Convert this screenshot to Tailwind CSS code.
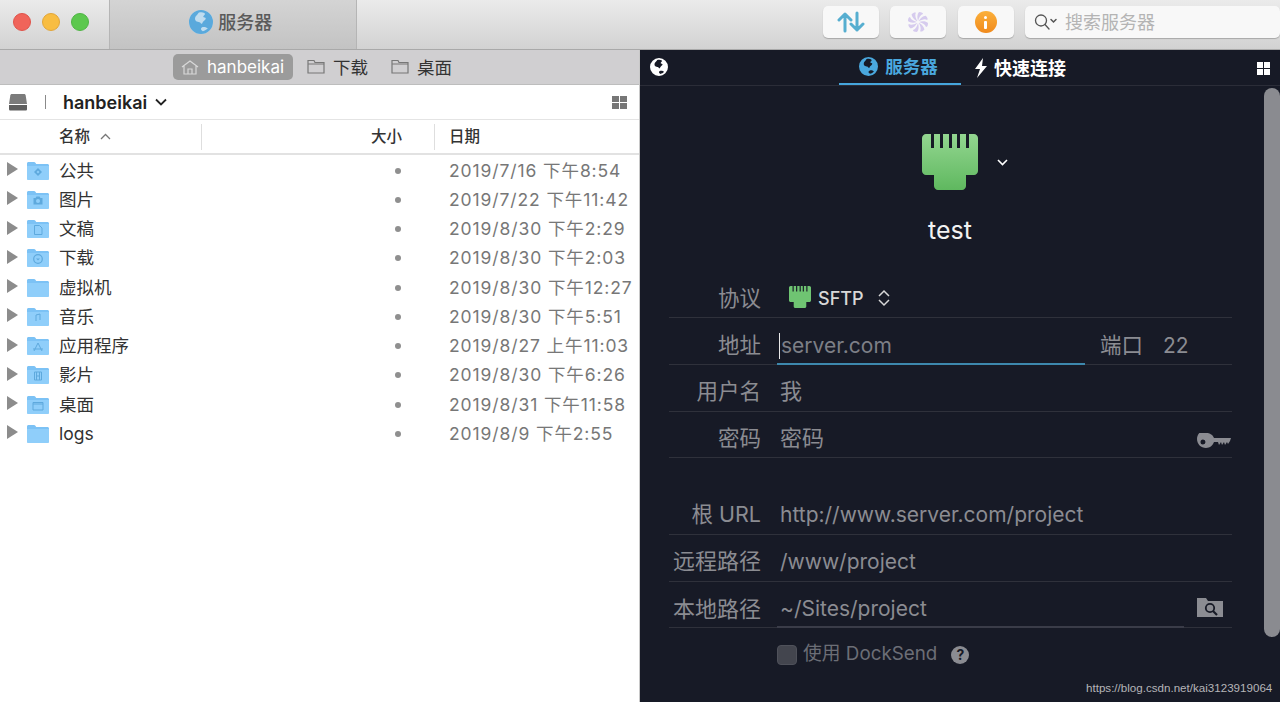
<!DOCTYPE html>
<html lang="en">
<head>
  <meta charset="UTF-8">
  <title>Transmit</title>
  <script src="https://cdn.jsdelivr.net/npm/@tailwindcss/browser@4"></script>
</head>
<body class="w-[1280px] h-[702px] overflow-hidden bg-white font-['Inter','Noto_Sans_CJK_SC',sans-serif]">
  <svg class="hidden">
    <symbol id="globe" viewBox="0 0 20 20">
      <path fill="currentColor" fill-rule="evenodd" d="M10 0a10 10 0 1 0 0 20a10 10 0 0 0 0-20zM8 2.200c1.600-.5 3.600-.5 4.800.4c1 .8.300 1.600-.5 2.200c-.8.600-.3 1.500.700 1.500c1.100 0 1.200 1 .5 1.800c-.9 1-2 1.500-2.300 2.800c-.2.800-1 .8-1.400.1c-.5-.9-1.600-1-2.500-1.200c-1.300-.3-2.400-1.400-2.300-2.800c.1-1.300.8-2.100 1.500-2.700c.6-.6 1-1.300 1.500-2.100zM11.500 14.200c1.400-.4 3.200.2 4.200 1.100c-1.100 1.200-2.500 2.100-4.200 2.400c-.7-.5-1.500-.9-1.500-1.800c0-.8.700-1.400 1.500-1.700z"/>
    </symbol>
    <symbol id="folder" viewBox="0 0 24 20">
      <path fill="#7cc2f5" d="M1 2.500c0-.8.600-1.500 1.500-1.500h5.500c.7 0 1 .3 1.400.8l.8 1.200h11.300c.8 0 1.500.7 1.500 1.500v13c0 .8-.7 1.500-1.500 1.500h-19c-.8 0-1.500-.7-1.500-1.500z"/>
      <path fill="#8fcefa" d="M1 5h22v12.500c0 .8-.7 1.500-1.500 1.500h-19c-.8 0-1.500-.7-1.500-1.500z"/>
    </symbol>
    <symbol id="jack" viewBox="0 0 56 56">
      <path fill="currentColor" d="M4 0h5v14h3V0h6v14h3V0h6v14h3V0h5v14h3V0h6v14h3V0h5c2 0 4 2 4 4v33c0 2-2 4-4 4H44v11c0 2-2 4-4 4H16c-2 0-4-2-4-4V41H4c-2 0-4-2-4-4V4c0-2 2-4 4-4z"/>
    </symbol>
  </svg>

  <!-- toolbar -->
  <header class="h-[50px] flex items-start bg-gradient-to-b from-[#ebebeb] to-[#d2d2d2] border-b border-[#a9a9a9]">
    <div class="w-[109px] h-[44px] flex items-center gap-[11px] pl-[13px]">
      <span class="w-[18px] h-[18px] rounded-full bg-[#f0645a] border border-[#e0534a]"></span>
      <span class="w-[18px] h-[18px] rounded-full bg-[#f8bd42] border border-[#e2a63a]"></span>
      <span class="w-[18px] h-[18px] rounded-full bg-[#5cc84e] border border-[#4fb544]"></span>
    </div>
    <div class="w-[248px] h-[49px] flex items-center justify-center gap-[5px] pr-[4px] pb-[5px] bg-gradient-to-b from-[#d4d4d4] to-[#c3c3c3] border-x border-[#b5b5b5]">
      <span class="w-[24px] h-[24px] rounded-full bg-[#bfdcef]">
        <svg class="w-[24px] h-[24px] text-[#5aa9dc]"><use href="#globe"/></svg>
      </span>
      <span class="text-[18px] font-medium text-[#5a5a5a]">服务器</span>
    </div>
    <div class="flex-1 h-[44px] flex items-center pl-[466px] gap-[11.500px]">
      <button class="w-[56px] h-[32px] flex items-center justify-center bg-[#f8f8f8] rounded-[5px] shadow-[0_1px_1px_#a8a8a8]">
        <svg class="w-[28px] h-[22px]" viewBox="0 0 28 22" fill="none" stroke="#56aed0" stroke-width="3" stroke-linecap="round" stroke-linejoin="round"><path d="M8 20V3M2 9l6-6l6 6M20 2v17M14 13l6 6l6-6"/></svg>
      </button>
      <button class="w-[56px] h-[32px] flex items-center justify-center bg-[#f8f8f8] rounded-[5px] shadow-[0_1px_1px_#a8a8a8]">
        <svg class="w-[22px] h-[22px]" viewBox="0 0 22 22" fill="#d6cbee"><path d="M11 10c-1-3-1-7 1-9c3 0 4 1 4 2c-3 1-4 4-5 7z"/><path transform="rotate(45 11 11)" d="M11 10c-1-3-1-7 1-9c3 0 4 1 4 2c-3 1-4 4-5 7z"/><path transform="rotate(90 11 11)" d="M11 10c-1-3-1-7 1-9c3 0 4 1 4 2c-3 1-4 4-5 7z"/><path transform="rotate(135 11 11)" d="M11 10c-1-3-1-7 1-9c3 0 4 1 4 2c-3 1-4 4-5 7z"/><path transform="rotate(180 11 11)" d="M11 10c-1-3-1-7 1-9c3 0 4 1 4 2c-3 1-4 4-5 7z"/><path transform="rotate(225 11 11)" d="M11 10c-1-3-1-7 1-9c3 0 4 1 4 2c-3 1-4 4-5 7z"/><path transform="rotate(270 11 11)" d="M11 10c-1-3-1-7 1-9c3 0 4 1 4 2c-3 1-4 4-5 7z"/><path transform="rotate(315 11 11)" d="M11 10c-1-3-1-7 1-9c3 0 4 1 4 2c-3 1-4 4-5 7z"/></svg>
      </button>
      <button class="w-[56px] h-[32px] flex items-center justify-center bg-[#f8f8f8] rounded-[5px] shadow-[0_1px_1px_#a8a8a8]">
        <span class="w-[22px] h-[22px] rounded-full bg-gradient-to-b from-[#fbb03a] to-[#f08a1c] flex flex-col items-center justify-center gap-[2px]">
          <span class="w-[3px] h-[3px] bg-white rounded-full"></span>
          <span class="w-[3px] h-[8px] bg-white rounded-[1px]"></span>
        </span>
      </button>
      <div class="w-[255px] h-[32px] flex items-center bg-[#f8f8f8] rounded-[5px] shadow-[0_1px_1px_#a8a8a8] pl-[9px]">
        <svg class="w-[24px] h-[18px]" viewBox="0 0 24 18" fill="none" stroke="#555" stroke-width="1.300" stroke-linecap="round"><circle cx="7" cy="7.500" r="5.500"/><path d="M11 11.500l4 4.500"/><path stroke-width="1.500" d="M17 6.500l2.500 2.500l2.500-2.500"/></svg>
        <span class="ml-[7px] text-[18px] text-[#b4b4b4]">搜索服务器</span>
      </div>
    </div>
  </header>

  <main class="flex h-[652px]">
    <!-- local pane -->
    <section class="w-[640px] flex flex-col border-r border-[#c8c8c8] bg-white">
      <nav class="h-[35px] flex items-center pl-[173px] pb-[1px] bg-[#d0cfd1] border-b border-[#bdbdbd]">
        <div class="w-[120px] h-[26px] flex items-center gap-[8px] pl-[8px] rounded-[5px] bg-[#9b9b9b] text-white text-[17px]">
          <svg class="w-[18px] h-[16px]" viewBox="0 0 18 16" fill="none" stroke="#d8d8d8" stroke-width="1.200"><path d="M1 8l8-6l8 6M3 7v8h12V7M7 15v-5h4v5"/></svg>
          <span class="pt-[2px]">hanbeikai</span>
        </div>
        <div class="ml-[14px] flex items-center gap-[8px] text-[17.500px] text-[#333]">
          <svg class="w-[18px] h-[15px]" viewBox="0 0 18 15" fill="none" stroke="#777" stroke-width="1.200"><path d="M1 4V1.500h6L8 3.500h9V14H1zM1 5h16"/></svg>
          <span class="pt-[4px]">下载</span>
        </div>
        <div class="ml-[23px] flex items-center gap-[8px] text-[17.500px] text-[#333]">
          <svg class="w-[18px] h-[15px]" viewBox="0 0 18 15" fill="none" stroke="#777" stroke-width="1.200"><path d="M1 4V1.500h6L8 3.500h9V14H1zM1 5h16"/></svg>
          <span class="pt-[4px]">桌面</span>
        </div>
      </nav>
      <div class="h-[35px] flex items-center pl-[9px] pr-[12px] border-b border-[#e4e4e4]">
        <svg class="w-[18px] h-[18px]" viewBox="0 0 18 18"><path fill="#7b7b7b" d="M3 1h12c1 0 1.500.5 1.700 1.500L18 11H0l1.300-8.500C1.500 1.500 2 1 3 1z"/><path fill="#5f5f5f" d="M0 12h18v4c0 1-.5 1.500-1.500 1.500h-15C.5 17.500 0 17 0 16z"/></svg>
        <span class="ml-[18px] w-px h-[14px] bg-[#8a8a8a]"></span>
        <span class="ml-[17px] pt-[1px] text-[18px] font-semibold text-[#222]">hanbeikai</span>
        <svg class="ml-[8px] w-[12px] h-[8px]" viewBox="0 0 12 8" fill="none" stroke="#222" stroke-width="1.800"><path d="M1 1.500l5 5l5-5"/></svg>
        <span class="ml-auto grid grid-cols-2 gap-[1px]">
          <i class="w-[7px] h-[6px] bg-[#777]"></i><i class="w-[7px] h-[6px] bg-[#777]"></i><i class="w-[7px] h-[6px] bg-[#777]"></i><i class="w-[7px] h-[6px] bg-[#777]"></i>
        </span>
      </div>
      <div class="h-[35px] flex items-center border-b-2 border-[#e2e2e2] text-[15.500px] font-medium text-[#333]">
        <div class="w-[202px] h-[26px] flex items-center pl-[59px] gap-[10px] border-r border-[#dedede]">
          名称
          <svg class="w-[11px] h-[7px]" viewBox="0 0 11 7" fill="none" stroke="#777" stroke-width="1.300"><path d="M1 6l4.500-4.500L10 6"/></svg>
        </div>
        <div class="w-[233px] h-[26px] flex items-center justify-end pr-[32px] border-r border-[#dedede]">大小</div>
        <div class="pl-[14px]">日期</div>
      </div>
      <div id="rows" class="pt-[1px]"></div>
    </section>

    <!-- remote pane -->
    <section class="relative flex-1 bg-[#171a26]">
      <nav class="h-[35px] flex items-center relative">
        <svg class="absolute left-[10px] top-[8px] w-[18px] h-[18px] text-white"><use href="#globe"/></svg>
        <div class="ml-[199px] w-[122px] h-[35px] flex items-center justify-center gap-[7px] pr-[3px] border-b-2 border-[#45a5dc] text-[#4aa8de] text-[17.500px] font-semibold">
          <svg class="w-[19px] h-[19px]"><use href="#globe"/></svg><span class="pt-[1px]">服务器</span>
        </div>
        <div class="flex items-center gap-[6px] pl-[13px] h-[35px] text-white text-[18px] font-semibold">
          <svg class="w-[14px] h-[22px]" viewBox="0 0 14 20" fill="#fff"><path d="M9 0L1 11h5l-3 9l10-12H8z"/></svg><span class="pt-[1px]">快速连接</span>
        </div>
        <span class="absolute left-[617px] top-[12px] grid grid-cols-2 gap-[1px]">
          <i class="w-[6px] h-[6px] bg-white"></i><i class="w-[6px] h-[6px] bg-white"></i><i class="w-[6px] h-[6px] bg-white"></i><i class="w-[6px] h-[6px] bg-white"></i>
        </span>
      </nav>
      <div class="h-px bg-[#2b2d38]"></div>

      <div class="flex flex-col items-center pr-[20px] pt-[48px]">
        <div class="flex items-center pl-[30px]">
          <svg class="w-[56px] h-[56px]" viewBox="0 0 56 56">
            <defs><linearGradient id="green" x1="0" y1="0" x2="0" y2="1"><stop offset="0" stop-color="#93d690"/><stop offset="1" stop-color="#5fb85f"/></linearGradient></defs>
            <path fill="url(#green)" d="M4 0h5v14h3V0h6v14h3V0h6v14h3V0h5v14h3V0h6v14h3V0h5c2 0 4 2 4 4v33c0 2-2 4-4 4H44v11c0 2-2 4-4 4H16c-2 0-4-2-4-4V41H4c-2 0-4-2-4-4V4c0-2 2-4 4-4z"/>
          </svg>
          <svg class="ml-[19px] w-[11px] h-[7px]" viewBox="0 0 11 7" fill="none" stroke="#fff" stroke-width="1.600"><path d="M1 1l4.500 4.500L10 1"/></svg>
        </div>
        <div class="mt-[23px] h-[34px] text-[25px] leading-[34px] text-[#f2f2f2]">test</div>
      </div>

      <form class="absolute left-[29px] top-[221px] w-[563px] text-[21px] text-[#8b8c92]">
        <div class="h-[47px] flex items-center pt-[9px] border-b border-[#2f313b]">
          <label class="w-[92px] text-right text-[21.500px]">协议</label>
          <svg class="ml-[28px] w-[22px] h-[22px] text-[#6fc472] mb-[4px]"><use href="#jack"/></svg>
          <span class="ml-[7px] text-[18px] font-medium text-[#d8d8d8]">SFTP</span>
          <svg class="ml-[13px] w-[14px] h-[18px] mb-[2px]" viewBox="0 0 14 18" fill="none" stroke="#d8d8d8" stroke-width="1.500"><path d="M2 7l5-5l5 5M2 11l5 5l5-5"/></svg>
        </div>
        <div class="relative h-[47px] flex items-center pt-[9px] border-b border-[#2f313b]">
          <label class="w-[92px] text-right text-[21.500px]">地址</label>
          <span class="ml-[18px] w-px h-[26px] bg-[#e8e8e8]"></span>
          <span class="ml-[1px] text-[#7d7f86]">server.com</span>
          <span class="absolute left-[431px] text-[21.500px]">端口</span>
          <span class="absolute left-[494px]">22</span>
          <span class="absolute left-[108px] bottom-[-1px] w-[308px] h-[2px] bg-[#3d88ad]"></span>
        </div>
        <div class="h-[47px] flex items-center pt-[7px] border-b border-[#2f313b]">
          <label class="w-[92px] text-right text-[21.500px]">用户名</label>
          <span class="ml-[19px] text-[22px]">我</span>
        </div>
        <div class="h-[46px] flex items-center pt-[7px] border-b border-[#2f313b]">
          <label class="w-[92px] text-right text-[21.500px]">密码</label>
          <span class="ml-[19px] text-[22px]">密码</span>
          <svg class="ml-auto mr-[1px] mt-[8px] w-[34px] h-[18px]" viewBox="0 0 34 18" fill="#8b8c92"><path fill-rule="evenodd" d="M9 0c4 0 7 2 8 5h17l-1 3l-2 3l-1-2l-2 3l-1-3l-2 3l-1-3l-2 3l-1-3h-4c-1 3-4 6-8 6c-5 0-9-4-9-9s4-9 9-9zM6 6.500a2.500 2.500 0 1 0 0 5a2.500 2.500 0 0 0 0-5z"/></svg>
        </div>
        <div class="h-[30px]"></div>
        <div class="h-[47px] flex items-center pt-[7px] border-b border-[#2f313b]">
          <label class="w-[92px] text-right text-[21.500px]">根 URL</label>
          <span class="ml-[19px]">http://www.server.com/project</span>
        </div>
        <div class="h-[47px] flex items-center pt-[7px] border-b border-[#2f313b]">
          <label class="w-[92px] text-right text-[22px]">远程路径</label>
          <span class="ml-[19px]">/www/project</span>
        </div>
        <div class="relative h-[46px] flex items-center pt-[9px] border-b border-[#2f313b]">
          <label class="w-[92px] text-right text-[22px]">本地路径</label>
          <span class="ml-[19px]">~/Sites/project</span>
          <svg class="ml-auto mr-[8px] mb-[4px] w-[28px] h-[22px]" viewBox="0 0 28 22"><path fill="#8b8c92" d="M1 2h9l2 3h15v16H1z"/><circle cx="14" cy="12" r="4.200" fill="none" stroke="#171a26" stroke-width="1.800"/><path d="M17 15l4 4" stroke="#171a26" stroke-width="2.200"/></svg>
          <span class="absolute left-[108px] bottom-[-1px] w-[407px] h-[2px] bg-[#3a3c48]"></span>
        </div>
        <div class="h-[52px] flex items-center pl-[108px] pt-[1px] text-[18.800px] text-[#6c6e76]">
          <span class="w-[20px] h-[20px] rounded-[4px] bg-[#43454e] border border-[#4f515a]"></span>
          <span class="ml-[6px]">使用 DockSend</span>
          <span class="ml-[14px] w-[18px] h-[18px] rounded-full bg-[#8b8c92] text-[#171a26] text-[14px] font-bold leading-[18px] text-center">?</span>
        </div>
      </form>

      <span class="absolute left-[624px] top-[38px] w-[16px] h-[549px] rounded-full bg-[#8a8b90]"></span>
      <span class="absolute left-[446px] top-[630px] text-[11.600px] leading-[16px] text-[#b5b5b8] font-['Liberation_Sans',sans-serif]">https://blog.csdn.net/kai3123919064</span>
    </section>
  </main>

  <script>
    const glyphs = {
      share: '<path d="M12 7l4 4l-4 4l-4-4z" fill="#5ea9dd"/><path d="M12 9.500l1.500 1.500l-1.500 1.500l-1.500-1.500z" fill="#8fcefa"/>',
      camera: '<path d="M7.500 8h2l1-1.500h3l1 1.500h2v6.500h-9z" fill="#5ea9dd"/><circle cx="12" cy="11" r="2" fill="#8fcefa"/>',
      doc: '<path d="M8.500 6.500h5l2.500 2.500v6.500h-7.500z" fill="none" stroke="#5ea9dd" stroke-width="1"/>',
      down: '<circle cx="12" cy="11" r="4.300" fill="none" stroke="#5ea9dd" stroke-width="1.200"/><path d="M10 10.500l2 2l2-2z" fill="#5ea9dd"/>',
      music: '<path d="M10 14V8l4-1v6" fill="none" stroke="#5ea9dd" stroke-width="1"/>',
      app: '<path d="M12 7l-4 8M12 7l4 8M7 13h10" fill="none" stroke="#5ea9dd" stroke-width="1"/>',
      film: '<path d="M8.500 7h7v8h-7zM10.500 7v8M13.500 7v8M10.500 11h3" fill="none" stroke="#5ea9dd" stroke-width="1"/>',
      win: '<path d="M7 7.500h10v7.500H7zM7 9h10" fill="none" stroke="#5ea9dd" stroke-width="1"/>',
      none: ''
    };
    const files = [
      ['公共', 'share', '2019/7/16 下午8:54'],
      ['图片', 'camera', '2019/7/22 下午11:42'],
      ['文稿', 'doc', '2019/8/30 下午2:29'],
      ['下载', 'down', '2019/8/30 下午2:03'],
      ['虚拟机', 'none', '2019/8/30 下午12:27'],
      ['音乐', 'music', '2019/8/30 下午5:51'],
      ['应用程序', 'app', '2019/8/27 上午11:03'],
      ['影片', 'film', '2019/8/30 下午6:26'],
      ['桌面', 'win', '2019/8/31 下午11:58'],
      ['logs', 'none', '2019/8/9 下午2:55']
    ];
    let kod = '';
    files.forEach(f => {
      kod += `
        <div class="h-[29.250px] flex items-center text-[17.500px]">
          <svg class="ml-[6px] w-[13px] h-[14px] mb-[3px]" viewBox="0 0 13 14"><path d="M1 0l11 7l-11 7z" fill="#8c8c8c"/></svg>
          <svg class="ml-[7px] w-[24px] h-[20px]" viewBox="0 0 24 20"><use href="#folder"/>${glyphs[f[1]]}</svg>
          <span class="ml-[9px] w-[336px] text-[#333]">${f[0]}</span>
          <span class="w-[6px] h-[6px] rounded-full bg-[#8f8f8f]"></span>
          <span class="ml-[48px] whitespace-nowrap text-[#777] tracking-[0.9px]">${f[2]}</span>
        </div>`;
    });
    document.getElementById('rows').innerHTML = kod;
  </script>
</body>
</html>
